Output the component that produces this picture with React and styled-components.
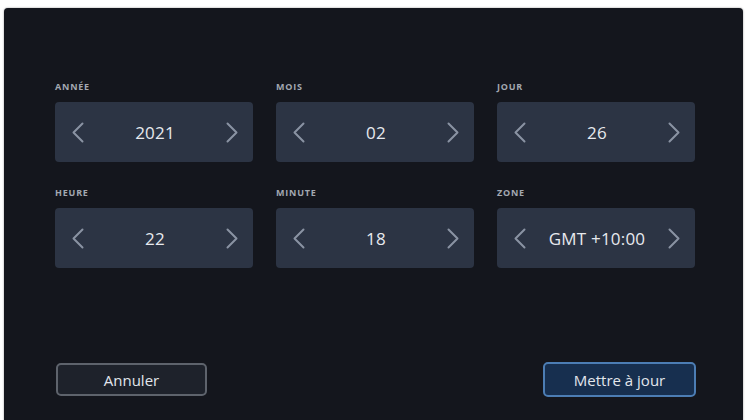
import React from "react";
import styled, { createGlobalStyle } from "styled-components";

const Global = createGlobalStyle`
  html, body { margin: 0; padding: 0; background: #ffffff; overflow: hidden; }
  body { font-family: "Open Sans", "Noto Sans", sans-serif; }
`;

const Page = styled.div`
  width: 748px;
  height: 420px;
  padding: 8px 5px 0 4px;
  box-sizing: border-box;
  overflow: hidden;
`;

const Panel = styled.div`
  height: 440px;
  background: #14161d;
  border-radius: 4px 4px 0 0;
  box-shadow: 0 0 2px rgba(0, 0, 0, 0.45);
  padding: 73px 48px 0 51px;
  box-sizing: border-box;
  display: flex;
  flex-direction: column;
`;

const Grid = styled.div`
  display: grid;
  grid-template-columns: repeat(3, 198px);
  column-gap: 23px;
  row-gap: 25px;
`;

const Field = styled.div`
  display: flex;
  flex-direction: column;
`;

const Label = styled.div`
  height: 12px;
  line-height: 12px;
  margin-bottom: 9px;
  font-size: 9px;
  font-weight: 700;
  letter-spacing: 0.8px;
  color: #a3a8b1;
  text-transform: uppercase;
`;

const Stepper = styled.div`
  height: 60px;
  border-radius: 4px;
  background: #2c3444;
  display: flex;
  align-items: center;
  padding: 0 15px 0 17px;
`;

const Arrow = styled.svg`
  width: 12px;
  height: 21px;
  flex: none;
  stroke: #8a93a3;
  stroke-width: 2;
  fill: none;
  stroke-linecap: round;
  stroke-linejoin: round;
`;

const Value = styled.div`
  flex: 1;
  text-align: center;
  font-size: 17px;
  font-weight: 500;
  color: #e7e9ee;
  letter-spacing: 0.2px;
`;

const Buttons = styled.div`
  margin-top: 94px;
  display: flex;
  justify-content: space-between;
  width: 641px;
  align-items: flex-start;
`;

const Button = styled.button`
  box-sizing: border-box;
  width: ${(p) => p.$w}px;
  height: ${(p) => p.$h}px;
  margin-left: ${(p) => (p.$primary ? 0 : 1)}px;
  margin-top: ${(p) => (p.$primary ? 0 : 1)}px;
  border-radius: 5px;
  border: 2px solid ${(p) => (p.$primary ? "#4c7db4" : "#5e636c")};
  background: ${(p) => (p.$primary ? "#172f4f" : "#1e222b")};
  color: #e2e6ec;
  font-family: "Open Sans", "Noto Sans", sans-serif;
  font-size: 15px;
  padding: 0;
  cursor: pointer;
`;

const Left = () => (
  <Arrow viewBox="0 0 12 21">
    <polyline points="10.5,1.5 1.5,10.5 10.5,19.5" />
  </Arrow>
);

const Right = () => (
  <Arrow viewBox="0 0 12 21">
    <polyline points="1.5,1.5 10.5,10.5 1.5,19.5" />
  </Arrow>
);

const fields = [
  { label: "Année", value: "2021" },
  { label: "Mois", value: "02" },
  { label: "Jour", value: "26" },
  { label: "Heure", value: "22" },
  { label: "Minute", value: "18" },
  { label: "Zone", value: "GMT +10:00" },
];

export default function App() {
  return (
    <>
      <Global />
      <Page>
        <Panel>
          <Grid>
            {fields.map((f) => (
              <Field key={f.label}>
                <Label>{f.label}</Label>
                <Stepper>
                  <Left />
                  <Value>{f.value}</Value>
                  <Right />
                </Stepper>
              </Field>
            ))}
          </Grid>
          <Buttons>
            <Button $w={151} $h={33}>Annuler</Button>
            <Button $primary $w={153} $h={35}>Mettre à jour</Button>
          </Buttons>
        </Panel>
      </Page>
    </>
  );
}
